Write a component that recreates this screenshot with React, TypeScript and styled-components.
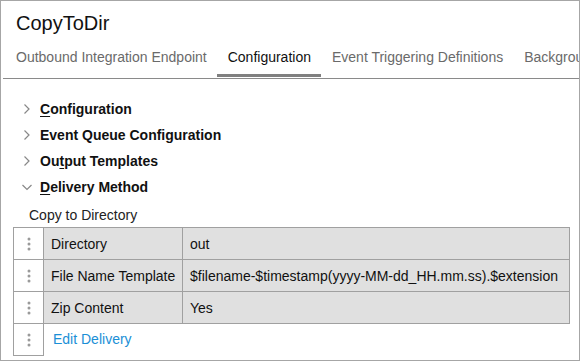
import React, { ReactElement } from "react";
import styled, { createGlobalStyle } from "styled-components";

const GlobalStyle = createGlobalStyle`
  html, body {
    margin: 0;
    padding: 0;
    background: #fff;
  }
  body {
    font-family: "Liberation Sans", Arial, sans-serif;
    color: #111;
  }
`;

const Frame = styled.div`
  box-sizing: border-box;
  width: 580px;
  height: 361px;
  border: 1px solid #a6a6a6;
  overflow: hidden;
  display: flex;
  flex-direction: column;
`;

const Title = styled.h1`
  margin: 0;
  padding: 10px 0 0 15px;
  height: 34px;
  font-size: 20px;
  font-weight: normal;
  line-height: 24px;
  color: #111;
`;

const TabBar = styled.div`
  display: flex;
  margin-left: 2px;
  padding-left: 2px;
  height: 33px;
  border-bottom: 1px solid #8a8a8a;
  white-space: nowrap;
  overflow: hidden;
`;

const Tab = styled.div<{ $active?: boolean }>`
  box-sizing: border-box;
  padding: 4px 10px 0 11px;
  font-size: 14px;
  line-height: 16px;
  color: ${(p) => (p.$active ? "#111" : "#6a6a6a")};
  border-bottom: 3px solid ${(p) => (p.$active ? "#808080" : "transparent")};
  height: 32px;
  flex-shrink: 0;
`;

const Sections = styled.div`
  padding: 17px 0 0 0;
  display: flex;
  flex-direction: column;
`;

const SectionRow = styled.div`
  display: flex;
  align-items: center;
  height: 26px;
  padding-left: 20px;
  font-size: 14px;
  font-weight: bold;
  color: #111;
`;

const Chevron = styled.svg`
  width: 12px;
  height: 12px;
  margin-right: 7px;
  flex-shrink: 0;
`;

const Key = styled.span`
  text-decoration: underline;
  text-underline-offset: 2px;
`;

const SubTitle = styled.div`
  padding: 7px 0 0 28px;
  font-size: 14px;
  line-height: 16px;
  color: #222;
`;

const Grid = styled.div`
  margin: 4px 0 0 12px;
  display: grid;
  grid-template-columns: 30px 139px 387px;
  grid-auto-rows: 32px;
`;

const Handle = styled.div`
  box-sizing: border-box;
  border: 1px solid #a0a0a0;
  margin: 0 -1px -1px 0;
  background: #fff;
  display: flex;
  align-items: center;
  justify-content: center;
`;

const Cell = styled.div`
  box-sizing: border-box;
  border: 1px solid #a0a0a0;
  margin: 0 -1px -1px 0;
  background: #e0e0e0;
  display: flex;
  align-items: center;
  padding-left: 7px;
  font-size: 14px;
  color: #111;
  white-space: nowrap;
`;

const LinkCell = styled.div`
  grid-column: span 2;
  display: flex;
  align-items: center;
  padding-left: 10px;
  font-size: 14px;
  color: #1b8fd6;
`;

function Dots(): ReactElement {
  return (
    <svg width="4" height="14" viewBox="0 0 4 14">
      <circle cx="2" cy="2" r="1.5" fill="#9a9a9a" />
      <circle cx="2" cy="7" r="1.5" fill="#9a9a9a" />
      <circle cx="2" cy="12" r="1.5" fill="#9a9a9a" />
    </svg>
  );
}

function Arrow({ open }: { open?: boolean }): ReactElement {
  return (
    <Chevron viewBox="0 0 12 12">
      {open ? (
        <path d="M1.5 4 L6 8.5 L10.5 4" fill="none" stroke="#888" strokeWidth="1.2" />
      ) : (
        <path d="M3.5 1.5 L8 6 L3.5 10.5" fill="none" stroke="#888" strokeWidth="1.2" />
      )}
    </Chevron>
  );
}

const rows = [
  { label: "Directory", value: "out" },
  {
    label: "File Name Template",
    value: "$filename-$timestamp(yyyy-MM-dd_HH.mm.ss).$extension",
  },
  { label: "Zip Content", value: "Yes" },
];

export default function App(): ReactElement {
  return (
    <>
      <GlobalStyle />
      <Frame>
        <Title>CopyToDir</Title>
        <TabBar>
          <Tab>Outbound Integration Endpoint</Tab>
          <Tab $active>Configuration</Tab>
          <Tab>Event Triggering Definitions</Tab>
          <Tab>Background Processing</Tab>
        </TabBar>
        <Sections>
          <SectionRow>
            <Arrow />
            <span>
              <Key>C</Key>onfiguration
            </span>
          </SectionRow>
          <SectionRow>
            <Arrow />
            <span>Event Queue Configuration</span>
          </SectionRow>
          <SectionRow>
            <Arrow />
            <span>
              Ou<Key>t</Key>put Templates
            </span>
          </SectionRow>
          <SectionRow>
            <Arrow open />
            <span>
              <Key>D</Key>elivery Method
            </span>
          </SectionRow>
          <SubTitle>Copy to Directory</SubTitle>
          <Grid>
            {rows.map((r) => (
              <React.Fragment key={r.label}>
                <Handle>
                  <Dots />
                </Handle>
                <Cell>{r.label}</Cell>
                <Cell>{r.value}</Cell>
              </React.Fragment>
            ))}
            <Handle>
              <Dots />
            </Handle>
            <LinkCell>Edit Delivery</LinkCell>
          </Grid>
        </Sections>
      </Frame>
    </>
  );
}
